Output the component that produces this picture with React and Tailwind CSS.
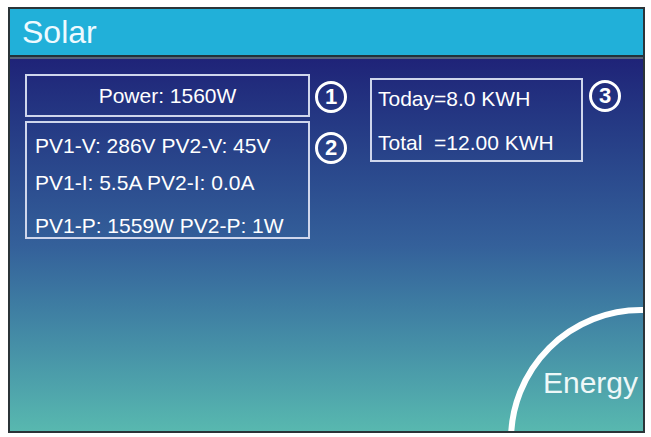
import React from 'react';

const font = { fontFamily: '"Liberation Sans", Arial, sans-serif' };

const Badge = ({ n }) => (
  <div className="w-[32px] h-[32px] rounded-full border-[3px] border-white flex items-center justify-center text-white text-[22px] font-bold leading-none shrink-0">
    {n}
  </div>
);

export default function App() {
  return (
    <div className="w-[651px] h-[437px] bg-white pt-[7px] pl-[8px]" style={font}>
      <div className="w-[637px] h-[426px] border-2 border-[#2b3438] flex flex-col overflow-hidden relative">
        {/* header */}
        <div className="h-[46px] bg-[#21b0d9] flex items-center pl-[12px] shrink-0">
          <span className="text-[#eefaff] text-[32px] leading-none">Solar</span>
        </div>
        <div className="h-[2px] bg-[#22323a] shrink-0" />
        <div className="h-[2px] bg-[#56657a] shrink-0" />

        {/* body */}
        <div className="flex-1 flex flex-col bg-gradient-to-b from-[#1f2378] via-[#34609a] to-[#58b8af] relative text-white">
          <div className="flex pl-[15px] pt-[15px]">
            <div className="flex flex-col gap-[4px] w-[285px]">
              <div className="h-[43px] border-2 border-[#cfd6ec] flex items-center justify-center text-[21px]">
                Power: 1560W
              </div>
              <div className="h-[118px] border-2 border-[#cfd6ec] pl-[8px] text-[21px] leading-none">
                <div className="mt-[12px]">PV1-V: 286V PV2-V: 45V</div>
                <div className="mt-[16px]">PV1-I: 5.5A PV2-I: 0.0A</div>
                <div className="mt-[22px]">PV1-P: 1559W PV2-P: 1W</div>
              </div>
            </div>

            <div className="flex flex-col ml-[5px] pt-[7px] gap-[19px]">
              <Badge n="1" />
              <Badge n="2" />
            </div>

            <div className="ml-[23px] mt-[4px] w-[213px] h-[84px] border-2 border-[#cfd6ec] pl-[6px] text-[21px] leading-none">
              <div className="mt-[8px]">Today=8.0 KWH</div>
              <div className="mt-[23px] whitespace-pre">Total  =12.00 KWH</div>
            </div>

            <div className="ml-[6px] mt-[6px]">
              <Badge n="3" />
            </div>
          </div>

          <div className="mt-auto flex justify-end pr-[5px] pb-[33px]">
            <span className="text-[30px] leading-none text-[#eef8f8]">Energy</span>
          </div>

          <div className="absolute left-[498px] top-[248px] w-[266px] h-[266px] rounded-full border-[6px] border-white pointer-events-none" />
        </div>
      </div>
    </div>
  );
}
